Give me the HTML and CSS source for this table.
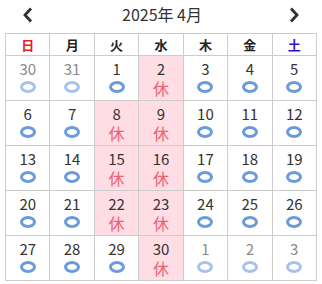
FILE: index.html
```html
<!DOCTYPE html>
<html lang="ja">
<head>
    <meta charset="UTF-8">
    <title>予約カレンダー</title>
    <link rel="stylesheet" href="styles.css">
</head>
<body>
    <div class="cal">
        <!-- 月の切り替え -->
        <div class="cal-head">
            <button class="nav prev" aria-label="前の月">
                <svg width="12" height="16" viewBox="0 0 12 16"><polyline points="9,1.5 3,8 9,14.5" /></svg>
            </button>
            <div class="ym">2025年 4月</div>
            <button class="nav next" aria-label="次の月">
                <svg width="12" height="16" viewBox="0 0 12 16"><polyline points="3,1.5 9,8 3,14.5" /></svg>
            </button>
        </div>

        <table class="days">
            <thead>
                <tr>
                    <th class="sun">日</th><th>月</th><th>火</th><th>水</th><th>木</th><th>金</th><th class="sat">土</th>
                </tr>
            </thead>
            <tbody>
                <tr>
                    <td class="other"><span class="num">30</span><span class="ok"></span></td>
                    <td class="other"><span class="num">31</span><span class="ok"></span></td>
                    <td><span class="num">1</span><span class="ok"></span></td>
                    <td class="off"><span class="num">2</span><span class="rest">休</span></td>
                    <td><span class="num">3</span><span class="ok"></span></td>
                    <td><span class="num">4</span><span class="ok"></span></td>
                    <td><span class="num">5</span><span class="ok"></span></td>
                </tr>
                <tr>
                    <td><span class="num">6</span><span class="ok"></span></td>
                    <td><span class="num">7</span><span class="ok"></span></td>
                    <td class="off"><span class="num">8</span><span class="rest">休</span></td>
                    <td class="off"><span class="num">9</span><span class="rest">休</span></td>
                    <td><span class="num">10</span><span class="ok"></span></td>
                    <td><span class="num">11</span><span class="ok"></span></td>
                    <td><span class="num">12</span><span class="ok"></span></td>
                </tr>
                <tr>
                    <td><span class="num">13</span><span class="ok"></span></td>
                    <td><span class="num">14</span><span class="ok"></span></td>
                    <td class="off"><span class="num">15</span><span class="rest">休</span></td>
                    <td class="off"><span class="num">16</span><span class="rest">休</span></td>
                    <td><span class="num">17</span><span class="ok"></span></td>
                    <td><span class="num">18</span><span class="ok"></span></td>
                    <td><span class="num">19</span><span class="ok"></span></td>
                </tr>
                <tr>
                    <td><span class="num">20</span><span class="ok"></span></td>
                    <td><span class="num">21</span><span class="ok"></span></td>
                    <td class="off"><span class="num">22</span><span class="rest">休</span></td>
                    <td class="off"><span class="num">23</span><span class="rest">休</span></td>
                    <td><span class="num">24</span><span class="ok"></span></td>
                    <td><span class="num">25</span><span class="ok"></span></td>
                    <td><span class="num">26</span><span class="ok"></span></td>
                </tr>
                <tr>
                    <td><span class="num">27</span><span class="ok"></span></td>
                    <td><span class="num">28</span><span class="ok"></span></td>
                    <td><span class="num">29</span><span class="ok"></span></td>
                    <td class="off"><span class="num">30</span><span class="rest">休</span></td>
                    <td class="other"><span class="num">1</span><span class="ok"></span></td>
                    <td class="other"><span class="num">2</span><span class="ok"></span></td>
                    <td class="other"><span class="num">3</span><span class="ok"></span></td>
                </tr>
            </tbody>
        </table>
    </div>
</body>
</html>
```

FILE: styles.css
```css
body{
    margin: 0;
    background: #fff;
    font-family: "Noto Sans CJK JP", "Noto Sans", sans-serif;
    color: #333;
}
.cal{
    padding: 0 5px;
}

/* 上部: 年月と矢印 */
.cal-head{
    display: flex;
    align-items: center;
    justify-content: space-between;
    height: 33px;
    padding: 0 15px 0 17px;
}
.ym{
    font-size: 16px;
    line-height: 1;
    margin-top: -5px;
}
.nav{
    border: none;
    background: none;
    padding: 0;
    width: 14px;
    height: 16px;
    margin-top: -4px;
    cursor: pointer;
}
.nav svg{
    display: block;
}
.nav polyline{
    fill: none;
    stroke: #333;
    stroke-width: 2.8;
}

/* 日付テーブル */
.days{
    width: 100%;
    border-collapse: collapse;
    table-layout: fixed;
}
.days th, .days td{
    border: 1px solid #ccc;
    text-align: center;
    padding: 0;
}
.days th{
    height: 21px;
    font-size: 13px;
    font-weight: bold;
    color: #222;
}
.days th.sun{
    color: #e0202a;
}
.days th.sat{
    color: #3a10c0;
}
.days td{
    height: 44px;
    vertical-align: top;
}
.num, .rest{
    display: block;
    font-size: 15px;
    line-height: 16px;
}
.num{
    margin-top: 5px;
}
/* 予約可能の丸印 */
.ok{
    display: block;
    width: 10px;
    height: 6px;
    margin: 4px auto 0;
    border: 3px solid #6b9bd9;
    border-radius: 50%;
}
/* 休業日 */
.off{
    background: #ffdde4;
}
.rest{
    font-size: 16px;
    color: #ea6477;
    margin-top: 3px;
}
/* 前後の月 */
.other .num{
    color: #8a8a8a;
}
.other .ok{
    border-color: #a7c3eb;
}
```
